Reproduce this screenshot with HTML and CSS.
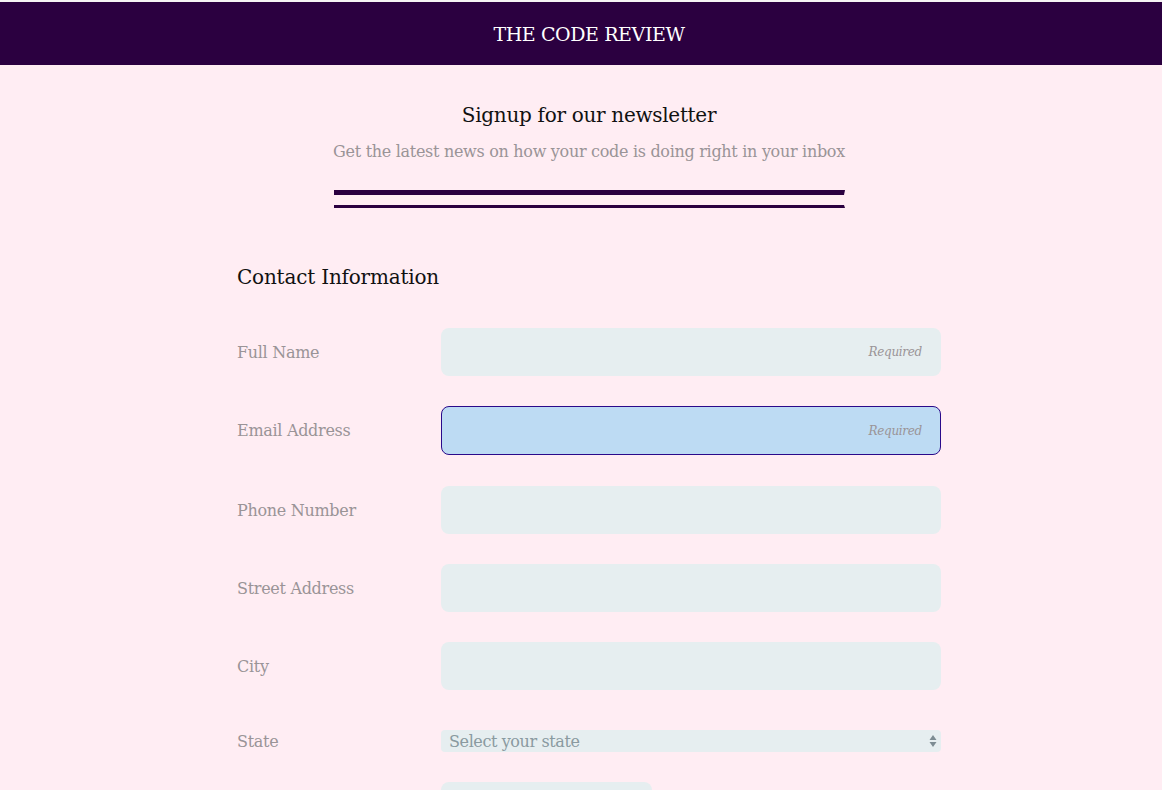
FILE: index.html
```html
<!DOCTYPE html>
<html lang="en">
<head>
<meta charset="utf-8">
<title>The Code Review</title>
<link rel="stylesheet" href="styles.css">
</head>
<body>
<header class="site-header">
  <h1 class="site-title">THE CODE REVIEW</h1>
</header>
<main class="page">
  <section class="intro">
    <h2 class="intro-title">Signup for our newsletter</h2>
    <p class="intro-sub">Get the latest news on how your code is doing right in your inbox</p>
    <div class="divider"></div>
  </section>
  <form class="form">
    <h3 class="form-title">Contact Information</h3>
    <div class="row">
      <label class="label" for="name">Full Name</label>
      <input class="field" id="name" type="text" placeholder="Required">
    </div>
    <div class="row">
      <label class="label" for="email">Email Address</label>
      <input class="field field-focus" id="email" type="email" placeholder="Required">
    </div>
    <div class="row">
      <label class="label" for="phone">Phone Number</label>
      <input class="field" id="phone" type="tel">
    </div>
    <div class="row">
      <label class="label" for="street">Street Address</label>
      <input class="field" id="street" type="text">
    </div>
    <div class="row">
      <label class="label" for="city">City</label>
      <input class="field" id="city" type="text">
    </div>
    <div class="row row-select">
      <label class="label" for="state">State</label>
      <div class="select">
        <span class="select-text">Select your state</span>
        <svg class="select-arrows" width="8" height="14" viewBox="0 0 8 14"><path d="M4 1 L7.5 6 L0.5 6 Z M4 13 L7.5 8 L0.5 8 Z" fill="#7d8c93"/></svg>
      </div>
    </div>
    <div class="row row-zip">
      <label class="label" for="zip"></label>
      <input class="field field-short" id="zip" type="text">
    </div>
  </form>
</main>
</body>
</html>
```

FILE: styles.css
```css
html, body {
  margin: 0;
  padding: 0;
}
body {
  background: #ffedf3;
  border-top: 2px solid #f6f3f5;
  font-family: "DejaVu Serif", "Liberation Serif", serif;
  overflow: hidden;
  height: 788px;
}
.site-header {
  background: #2b0040;
  height: 63px;
  display: flex;
  align-items: center;
  justify-content: center;
  padding-left: 16px;
}
.site-title {
  margin: 0;
  color: #ffffff;
  font-size: 19px;
  font-weight: normal;
  letter-spacing: -0.4px;
}
.page {
  padding-left: 16px;
}
.intro {
  display: flex;
  flex-direction: column;
  align-items: center;
  padding-top: 36px;
}
.intro-title {
  margin: 0;
  font-size: 20px;
  font-weight: normal;
  color: #111;
  line-height: 28px;
  letter-spacing: -0.3px;
}
.intro-sub {
  margin: 11px 0 0;
  font-size: 16px;
  color: #9a9497;
  line-height: 24px;
  letter-spacing: -0.3px;
}
.divider {
  margin-top: 26px;
  width: 510px;
  height: 10px;
  border-top: 5px solid #2b0040;
  border-bottom: 3px solid #2b0040;
  border-right: 1px solid transparent;
}
.form {
  width: 704px;
  margin: 56px auto 0;
  display: flex;
  flex-direction: column;
}
.form-title {
  margin: 0 0 38px;
  font-size: 20px;
  font-weight: normal;
  color: #111;
  line-height: 26px;
  letter-spacing: -0.2px;
}
.row {
  display: flex;
  align-items: center;
  margin-bottom: 30px;
}
.label {
  width: 204px;
  font-size: 16px;
  color: #9a9497;
  letter-spacing: -0.3px;
}
.field {
  box-sizing: border-box;
  width: 500px;
  height: 48px;
  border: 1px solid transparent;
  border-radius: 8px;
  background: #e6eef0;
  font-family: inherit;
  font-size: 12px;
  letter-spacing: -0.3px;
  padding: 0 18px;
  text-align: right;
  outline: none;
}
.field::placeholder {
  color: #9a9497;
  font-style: italic;
}
.field-focus {
  height: 49px;
  background: #bddbf3;
  border-color: #2a0a8a;
}
.field-focus + * {
  margin: 0;
}
.row:nth-child(3) {
  margin-bottom: 31px;
}
.row-select {
  margin-top: 10px;
  margin-bottom: 30px;
}
.select {
  box-sizing: border-box;
  width: 500px;
  height: 22px;
  background: #e6eef0;
  border-radius: 4px;
  display: flex;
  align-items: center;
  justify-content: space-between;
  padding: 0 4px 0 8px;
}
.select-text {
  font-size: 16px;
  color: #8a9aa0;
  letter-spacing: -0.4px;
}
.field-short {
  width: 211px;
}
```
